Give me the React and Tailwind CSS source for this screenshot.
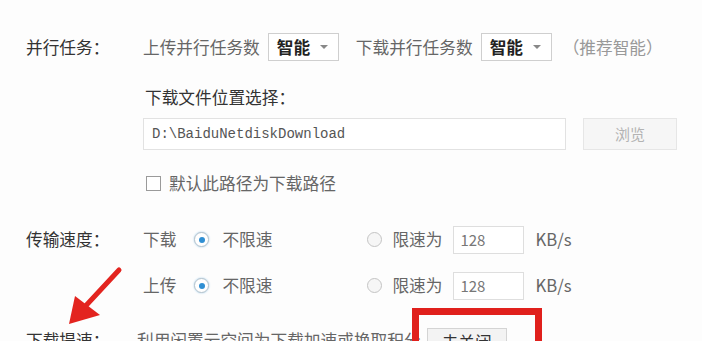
import React from "react";

const Select = () => (
  <div className="ml-[8px] flex h-[28px] w-[71px] items-center justify-between border border-[#cfcfcf] bg-white pl-[8px] pr-[10px]">
    <span className="font-bold text-[#222]">智能</span>
    <span className="h-0 w-0 border-x-[4px] border-t-[4px] border-x-transparent border-t-[#888]" />
  </div>
);

const Radio = ({ checked }) => (
  <span
    className={`flex h-[15px] w-[15px] items-center justify-center rounded-full border ${
      checked ? "border-[#b8c4cc] bg-white shadow-[0_0_2px_#9cc9e8]" : "border-[#c4c4c4] bg-[#f6f6f6]"
    }`}
  >
    {checked && <span className="h-[6px] w-[6px] rounded-full bg-[#2f8fd3]" />}
  </span>
);

const SpeedRow = ({ label, className }) => (
  <div className={`flex h-[28px] items-center ${className}`}>
    <div className="w-[117px] text-[#333]">{label === "下载" ? "传输速度：" : ""}</div>
    <span className="text-[#666]">{label}</span>
    <div className="ml-[18px] flex w-[173px] items-center">
      <Radio checked />
      <span className="ml-[13px] text-[#666]">不限速</span>
    </div>
    <Radio />
    <span className="ml-[10px] text-[#666]">限速为</span>
    <div className="ml-[11px] flex h-[28px] w-[71px] items-center border border-[#dedede] bg-white pl-[6px] text-[15px] text-[#777]">
      128
    </div>
    <span className="ml-[11px] text-[#666]">KB/s</span>
  </div>
);

export default function App() {
  return (
    <div className="relative h-[341px] w-[702px] overflow-hidden bg-[#fdfdfd] pl-[26px] font-['Noto_Sans_CJK_SC',sans-serif] text-[16.7px] leading-none">
      {/* 并行任务 */}
      <div className="mt-[33px] flex h-[28px] items-center">
        <div className="w-[117px] text-[#333]">并行任务：</div>
        <span className="text-[#666]">上传并行任务数</span>
        <Select />
        <span className="ml-[17px] text-[#666]">下载并行任务数</span>
        <Select />
        <span className="ml-[11px] text-[#999]">（推荐智能）</span>
      </div>

      {/* 下载文件位置 */}
      <div className="mt-[28px] pl-[119px] text-[#333]">下载文件位置选择：</div>
      <div className="mt-[12px] flex pl-[117px]">
        <div className="flex h-[32px] w-[423px] items-center border border-[#e2e2e2] bg-white pl-[8px] font-['Liberation_Mono',monospace] text-[14px] text-[#555]">
          D:\BaiduNetdiskDownload
        </div>
        <div className="ml-[17px] flex h-[32px] w-[94px] items-center justify-center border border-[#e6e6e6] bg-[#f6f6f6] text-[15px] text-[#b3b3b3]">
          浏览
        </div>
      </div>
      <div className="mt-[24px] flex h-[20px] items-center pl-[120px]">
        <span className="h-[15px] w-[15px] border border-[#9a9a9a] bg-white" />
        <span className="ml-[8px] text-[#666]">默认此路径为下载路径</span>
      </div>

      {/* 传输速度 */}
      <SpeedRow label="下载" className="mt-[32px]" />
      <SpeedRow label="上传" className="mt-[18px]" />

      {/* 下载提速 */}
      <div className="mt-[26px] flex items-start">
        <div className="mt-[6px] w-[111px] text-[#333]">下载提速：</div>
        <span className="mt-[6px] text-[#666]">利用闲置云空间为下载加速或换取积分</span>
        <div className="ml-[6px] mt-[2px] flex h-[30px] w-[80px] items-center justify-center border border-[#d4d4d4] bg-[#f3f3f3] text-[#333]">
          去关闭
        </div>
      </div>

      {/* annotation: red box */}
      <div className="absolute left-[412px] top-[308px] h-[60px] w-[130px] border-[7px] border-[#e0201c]" />

      {/* annotation: red arrow */}
      <svg className="absolute left-0 top-0" width="702" height="341" viewBox="0 0 702 341">
        <line x1="119" y1="270" x2="80" y2="312" stroke="#e3241f" strokeWidth="5" strokeLinecap="round" />
        <polygon points="69,324 75,296 100,315" fill="#e3241f" />
      </svg>
    </div>
  );
}
